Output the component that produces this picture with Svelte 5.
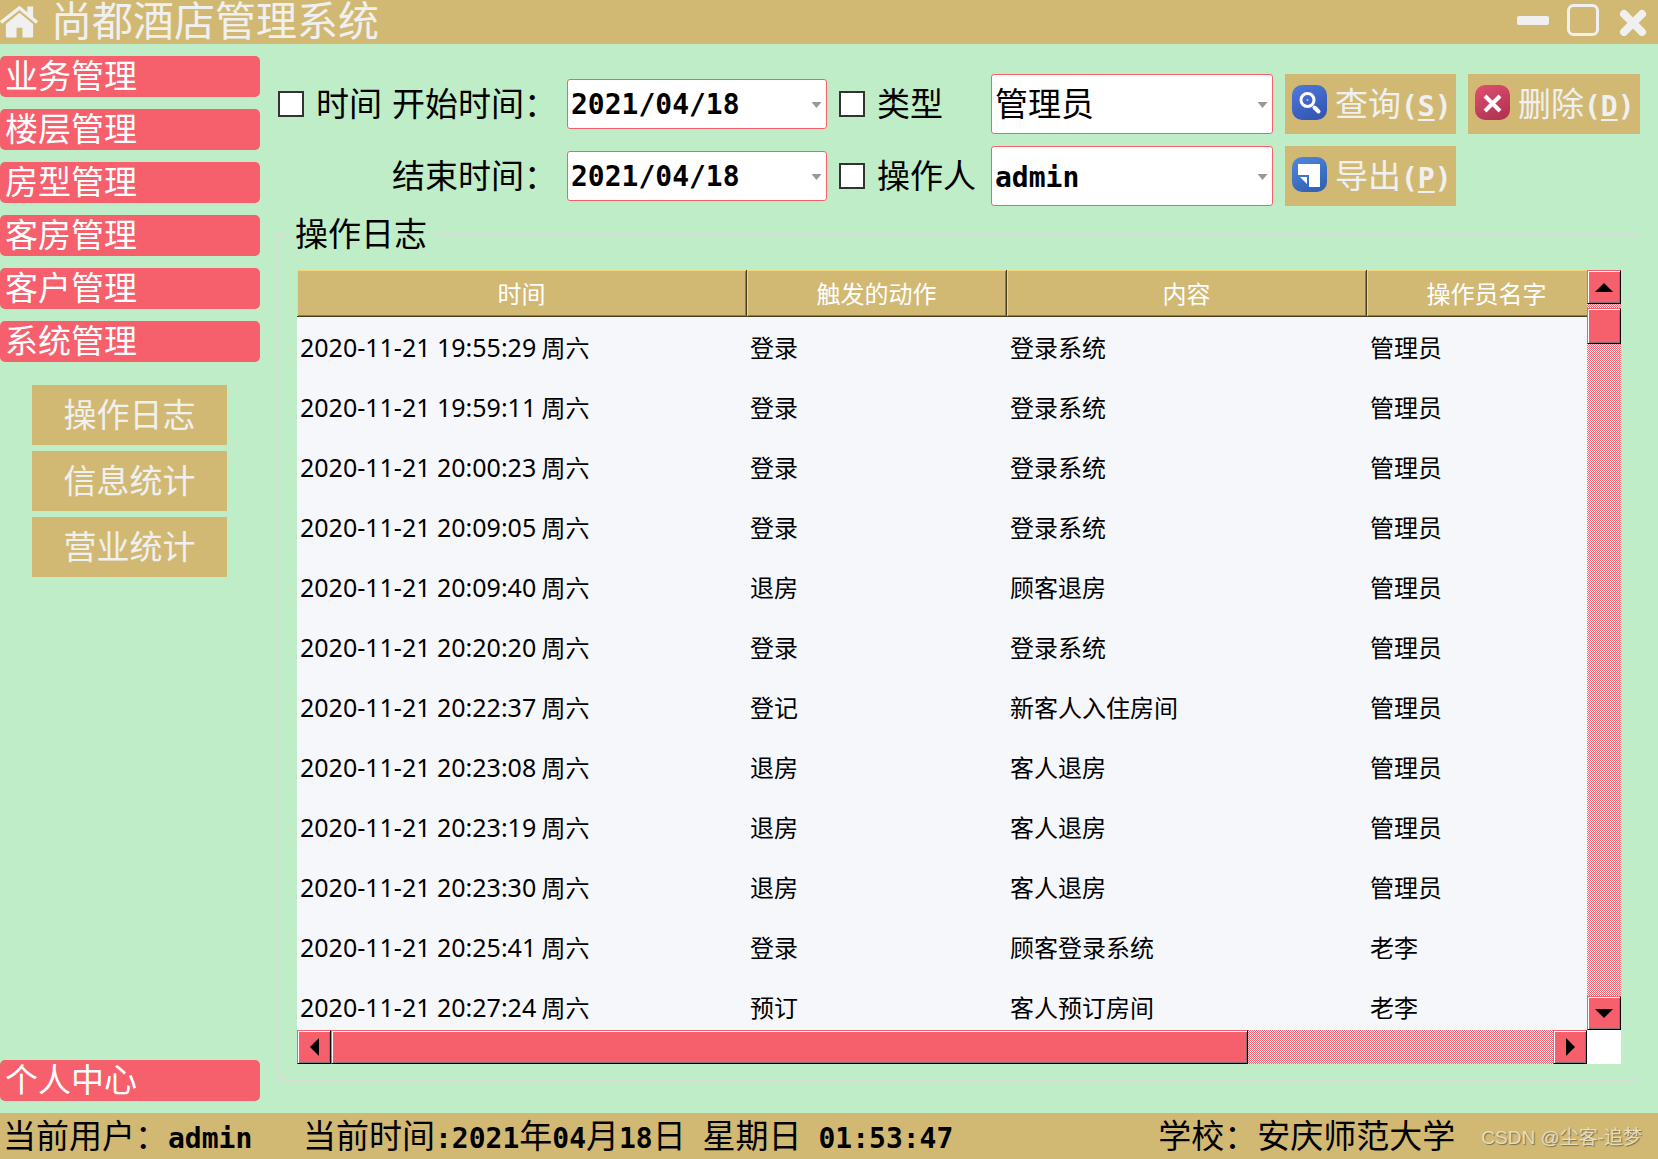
<script>
	const menus = ['业务管理', '楼层管理', '房型管理', '客房管理', '客户管理', '系统管理'];
	const subMenus = ['操作日志', '信息统计', '营业统计'];
	const columns = ['时间', '触发的动作', '内容', '操作员名字'];

	const logs = [
		{ time: '2020-11-21 19:55:29', action: '登录', content: '登录系统', operator: '管理员' },
		{ time: '2020-11-21 19:59:11', action: '登录', content: '登录系统', operator: '管理员' },
		{ time: '2020-11-21 20:00:23', action: '登录', content: '登录系统', operator: '管理员' },
		{ time: '2020-11-21 20:09:05', action: '登录', content: '登录系统', operator: '管理员' },
		{ time: '2020-11-21 20:09:40', action: '退房', content: '顾客退房', operator: '管理员' },
		{ time: '2020-11-21 20:20:20', action: '登录', content: '登录系统', operator: '管理员' },
		{ time: '2020-11-21 20:22:37', action: '登记', content: '新客人入住房间', operator: '管理员' },
		{ time: '2020-11-21 20:23:08', action: '退房', content: '客人退房', operator: '管理员' },
		{ time: '2020-11-21 20:23:19', action: '退房', content: '客人退房', operator: '管理员' },
		{ time: '2020-11-21 20:23:30', action: '退房', content: '客人退房', operator: '管理员' },
		{ time: '2020-11-21 20:25:41', action: '登录', content: '顾客登录系统', operator: '老李' },
		{ time: '2020-11-21 20:27:24', action: '预订', content: '客人预订房间', operator: '老李' }
	];

	let startDate = '2021/04/18';
	let endDate = '2021/04/18';
	let useTime = false;
	let useType = false;
	let useOperator = false;
	let viewport;

	function scroll(x, y) {
		viewport.scrollBy(x, y);
	}
</script>

<div class="window">
	<header>
		<svg class="home" viewBox="0 0 40 34" aria-hidden="true">
			<path d="M6 19 20 7.500 34 19V31.500a1.500 1.500 0 0 1-1.500 1.500H23V23h-6v10H7.500A1.500 1.500 0 0 1 6 31.500Z" />
			<path d="M1 17.500 20 2.500 38 17.500" fill="none" stroke="#f0f0f0" stroke-width="3.500" />
			<path d="M28 1h6v13l-6-5Z" />
		</svg>
		<h1>尚都酒店管理系统</h1>
		<div class="controls">
			<button aria-label="最小化">
				<svg width="32" height="32" viewBox="0 0 32 32"><rect y="12" width="32" height="9" rx="2" /></svg>
			</button>
			<button aria-label="最大化">
				<svg width="32" height="32" viewBox="0 0 32 32">
					<rect x="1.500" y="1.500" width="29" height="29" rx="5" fill="none" stroke="#f0f0f0" stroke-width="3" />
				</svg>
			</button>
			<button aria-label="关闭">
				<svg width="32" height="32" viewBox="0 0 32 32">
					<path d="M7 10 25 28M25 10 7 28" stroke="#f0f0f0" stroke-width="8" stroke-linecap="round" />
				</svg>
			</button>
		</div>
	</header>

	<div class="body">
		<nav>
			{#each menus as menu}
				<button class="menu">{menu}</button>
			{/each}
			<div class="sub">
				{#each subMenus as item}
					<button>{item}</button>
				{/each}
			</div>
			<button class="menu personal">个人中心</button>
		</nav>

		<main>
			<form class="filters" on:submit|preventDefault>
				<label class="check"><input type="checkbox" bind:checked={useTime} /><span>时间</span></label>
				<label class="name" for="start">开始时间：</label>
				<div class="field date">
					<input id="start" type="text" bind:value={startDate} />
					<svg class="arrow" viewBox="0 0 10 6"><path d="M0 0h10L5 6Z" /></svg>
				</div>
				<label class="check"><input type="checkbox" bind:checked={useType} /><span>类型</span></label>
				<div class="field">
					<select aria-label="类型"><option>管理员</option></select>
					<svg class="arrow" viewBox="0 0 10 6"><path d="M0 0h10L5 6Z" /></svg>
				</div>
				<button class="tool">
					<svg class="icon" viewBox="0 0 35 35" aria-hidden="true">
						<defs>
							<linearGradient id="search" x2="0.5" y2="1">
								<stop stop-color="#5078e0" /><stop offset="1" stop-color="#3458b4" />
							</linearGradient>
						</defs>
						<rect width="35" height="35" rx="10" fill="url(#search)" />
						<circle cx="15.500" cy="15" r="6.500" fill="none" stroke="#fff" stroke-width="3" />
						<circle cx="15.500" cy="15" r="1" fill="#b9c8f2" />
						<path d="m22.500 22.500 4 4" stroke="#fff" stroke-width="4" stroke-linecap="round" />
					</svg>
					<span>查询<b>(<u>S</u>)</b></span>
				</button>
				<button class="tool">
					<svg class="icon" viewBox="0 0 35 35" aria-hidden="true">
						<defs>
							<linearGradient id="remove" x2="0.5" y2="1">
								<stop stop-color="#e25070" /><stop offset="1" stop-color="#b43454" />
							</linearGradient>
						</defs>
						<rect width="35" height="35" rx="10" fill="url(#remove)" />
						<path d="m10 11 15 15M25 11 10 26" stroke="#fff" stroke-width="4" />
					</svg>
					<span>删除<b>(<u>D</u>)</b></span>
				</button>

				<label class="name end" for="end">结束时间：</label>
				<div class="field date">
					<input id="end" type="text" bind:value={endDate} />
					<svg class="arrow" viewBox="0 0 10 6"><path d="M0 0h10L5 6Z" /></svg>
				</div>
				<label class="check"><input type="checkbox" bind:checked={useOperator} /><span>操作人</span></label>
				<div class="field">
					<select class="latin" aria-label="操作人"><option>admin</option></select>
					<svg class="arrow" viewBox="0 0 10 6"><path d="M0 0h10L5 6Z" /></svg>
				</div>
				<button class="tool">
					<svg class="icon" viewBox="0 0 35 35" aria-hidden="true">
						<defs>
							<linearGradient id="export" x2="0.5" y2="1">
								<stop stop-color="#5088e0" /><stop offset="1" stop-color="#3464b4" />
							</linearGradient>
						</defs>
						<rect width="35" height="35" rx="10" fill="url(#export)" />
						<path d="M6 7h22v23H17V18H6Z" fill="#fff" />
						<path d="M8 20h7v7Z" fill="#fff" />
					</svg>
					<span>导出<b>(<u>P</u>)</b></span>
				</button>
			</form>

			<fieldset>
				<legend>操作日志</legend>
				<div class="grid">
					<div class="viewport" bind:this={viewport}>
						<table>
							<colgroup>
								<col class="c-time" />
								<col class="c-action" />
								<col class="c-content" />
								<col class="c-operator" />
							</colgroup>
							<thead>
								<tr>
									{#each columns as column}
										<th>{column}</th>
									{/each}
								</tr>
							</thead>
							<tbody>
								{#each logs as log}
									<tr>
										<td><time>{log.time}</time> 周六</td>
										<td>{log.action}</td>
										<td>{log.content}</td>
										<td>{log.operator}</td>
									</tr>
								{/each}
							</tbody>
						</table>
					</div>
					<div class="scrollbar vertical">
						<button type="button" aria-label="向上" on:click={() => scroll(0, -60)}>
							<svg width="18" height="9" viewBox="0 0 18 9"><path d="M0 9h18L9 0Z" /></svg>
						</button>
						<div class="track"><div class="thumb"></div></div>
						<button type="button" aria-label="向下" on:click={() => scroll(0, 60)}>
							<svg width="18" height="9" viewBox="0 0 18 9"><path d="M0 0h18L9 9Z" /></svg>
						</button>
					</div>
					<div class="scrollbar">
						<button type="button" aria-label="向左" on:click={() => scroll(-60, 0)}>
							<svg width="9" height="18" viewBox="0 0 9 18"><path d="M9 0v18L0 9Z" /></svg>
						</button>
						<div class="track"><div class="thumb"></div></div>
						<button type="button" aria-label="向右" on:click={() => scroll(60, 0)}>
							<svg width="9" height="18" viewBox="0 0 9 18"><path d="M0 0v18L9 9Z" /></svg>
						</button>
					</div>
					<div class="corner"></div>
				</div>
			</fieldset>
		</main>
	</div>

	<footer>
		<p class="user">当前用户：<b>admin</b></p>
		<p>当前时间<b>:2021</b>年<b>04</b>月<b>18</b>日<b>&nbsp;</b>星期日<b>&nbsp;01:53:47</b></p>
		<p class="school">学校：安庆师范大学</p>
		<small>CSDN @尘客-追梦</small>
	</footer>
</div>

<style>
	:global(body) {
		background: #bfedc8;
	}

	.window {
		display: flex;
		flex-direction: column;
		height: 100vh;
		font-family: 'Noto Sans CJK SC', sans-serif;
		font-size: 33px;
		line-height: 40px;
		color: #000;
	}

	button,
	input,
	select {
		font: inherit;
		color: inherit;
		margin: 0;
		padding: 0;
		border: 0;
		border-radius: 0;
		box-sizing: border-box;
	}

	b,
	.latin,
	.date input {
		font-family: 'DejaVu Sans Mono', monospace;
		font-size: 28px;
		font-weight: bold;
	}

	b {
		line-height: 32px;
	}

	header {
		display: flex;
		align-items: center;
		height: 44px;
		background: #d1b974;
		color: #f0f0f0;
	}

	header svg {
		fill: #f0f0f0;
	}

	.home {
		width: 39px;
		height: 34px;
	}

	h1 {
		flex: 1;
		margin: 0 0 0 12px;
		font-family: 'Liberation Sans', 'Noto Sans CJK SC', sans-serif;
		font-size: 41px;
		font-weight: 400;
		line-height: 44px;
	}

	.controls {
		display: flex;
		gap: 18px;
		margin-right: 9px;
	}

	.controls button {
		display: flex;
		background: none;
		padding-bottom: 4px;
	}

	.body {
		flex: 1;
		display: flex;
		gap: 18px;
		min-height: 0;
	}

	nav {
		display: flex;
		flex-direction: column;
		gap: 12px;
		width: 260px;
		padding: 12px 0;
	}

	.menu {
		height: 41px;
		flex: none;
		padding: 0 0 6px 5px;
		border-radius: 5px;
		background: #f5606c;
		color: #fff;
		line-height: 34px;
		text-align: left;
	}

	.personal {
		margin-top: auto;
	}

	.sub {
		display: flex;
		flex-direction: column;
		gap: 6px;
		width: 195px;
		margin: 11px 32px;
	}

	.sub button {
		height: 60px;
		padding-bottom: 4px;
		background: #d1b974;
		color: #f0f0f0;
	}

	main {
		flex: 1;
		display: flex;
		flex-direction: column;
		min-width: 0;
		padding: 30px 18px 32px 0;
	}

	.filters {
		display: grid;
		grid-template-columns: 102px 163px 260px 140px 1fr 171px 172px;
		gap: 12px;
		align-items: center;
		white-space: nowrap;
	}

	.end {
		grid-column: 2;
	}

	.name,
	.check span {
		padding-bottom: 4px;
	}

	.check {
		display: flex;
		align-items: center;
		gap: 12px;
	}

	.check input {
		appearance: none;
		flex: none;
		width: 26px;
		height: 26px;
		border: 2px solid #333;
		background: #fff;
	}

	.check input:checked {
		box-shadow: inset 0 0 0 4px #fff;
		background: #333;
	}

	.field {
		position: relative;
		height: 60px;
	}

	.field.date {
		height: 50px;
	}

	.field input,
	.field select {
		display: block;
		appearance: none;
		width: 100%;
		height: 100%;
		padding: 0 3px;
		border: 1px solid #f5606c;
		border-radius: 3px;
		background: #fff;
	}

	.field select {
		padding-bottom: 4px;
	}

	.field .latin {
		padding: 4px 3px 0;
	}

	.arrow {
		position: absolute;
		top: 50%;
		right: 5px;
		width: 11px;
		height: 6px;
		margin-top: -2px;
		fill: #999;
		pointer-events: none;
	}

	.tool {
		display: flex;
		align-items: center;
		gap: 8px;
		height: 60px;
		padding: 0 0 4px 7px;
		background: #d1b974;
		color: #f0f0f0;
	}

	.icon {
		width: 35px;
		height: 35px;
	}

	.tool u {
		text-decoration-thickness: 2px;
		text-underline-offset: 3px;
	}

	fieldset {
		flex: 1;
		display: flex;
		min-width: 0;
		min-height: 0;
		margin: 8px 0 0;
		padding: 16px 18px;
		border: 1px solid #d8dcd8;
	}

	legend {
		height: 40px;
		padding: 0 8px;
		margin-left: -10px;
		line-height: 36px;
	}

	.grid {
		flex: 1;
		display: grid;
		grid-template-columns: 1fr 34px;
		grid-template-rows: 1fr 34px;
		min-width: 0;
		min-height: 0;
	}

	.viewport {
		overflow: auto;
		scrollbar-width: none;
		background: #f6f7fb;
	}

	table {
		table-layout: fixed;
		width: 1310px;
		border-collapse: separate;
		border-spacing: 0;
		font-size: 24px;
		line-height: 32px;
	}

	.c-time {
		width: 450px;
	}

	.c-action {
		width: 260px;
	}

	.c-content {
		width: 360px;
	}

	.c-operator {
		width: 240px;
	}

	th {
		position: sticky;
		top: 0;
		box-sizing: border-box;
		height: 47px;
		padding: 0;
		border-right: 1px solid #4a3e20;
		border-bottom: 1px solid #4a3e20;
		background: #d1b974;
		box-shadow: inset 1px 1px #f3d77f, inset -1px -1px #8f7d48;
		color: #fff;
		font-weight: 400;
	}

	td {
		height: 60px;
		padding: 0 3px;
	}

	time {
		font-family: 'Noto Sans', sans-serif;
		font-size: 25px;
	}

	.scrollbar {
		display: flex;
	}

	.vertical {
		flex-direction: column;
	}

	.scrollbar button,
	.thumb {
		box-sizing: border-box;
		border: 1px solid;
		border-color: #f5606c #000 #000 #f5606c;
		background: #f5606c;
		box-shadow: inset 1px 1px #fff, inset -1px -1px #8a7072;
	}

	.scrollbar button {
		display: flex;
		flex: none;
		align-items: center;
		justify-content: center;
		width: 34px;
		height: 34px;
	}

	.track {
		flex: 1;
		background: repeating-conic-gradient(#f5606c 0 25%, #fff 0 50%) 0 0 / 2px 2px;
	}

	.track .thumb {
		width: 75%;
		height: 100%;
	}

	.vertical .thumb {
		width: 100%;
		height: 36px;
		margin-top: 4px;
	}

	.corner {
		background: #fff;
	}

	footer {
		display: flex;
		align-items: center;
		height: 46px;
		padding: 0 16px 0 3px;
		background: #d1b974;
		white-space: nowrap;
	}

	footer p {
		margin: 0;
		padding-bottom: 4px;
		line-height: 40px;
	}

	.user {
		width: 300px;
	}

	.school {
		margin: 0 26px 0 auto;
	}

	small {
		padding-top: 4px;
		font-size: 19px;
		font-family: 'Liberation Sans', 'Noto Sans CJK SC', sans-serif;
		color: #e6dcc0;
		text-shadow: 1px 1px 1px #7d6f45;
	}
</style>
